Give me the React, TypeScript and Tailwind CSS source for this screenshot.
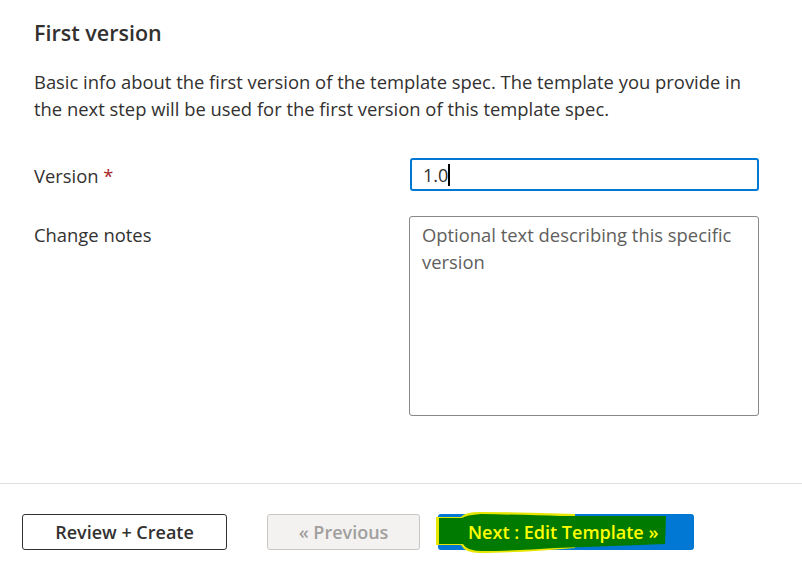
import { useState } from 'react'

const font = "font-['Open_Sans','Noto_Sans',sans-serif]"

export default function App() {
  const [version, setVersion] = useState('1.0')

  return (
    <main className={`h-[565px] w-[802px] overflow-hidden bg-white text-[#323130] ${font}`}>
      <section className="px-[34px] pt-[18px]">
        <h2 className="text-[21.5px] font-semibold leading-[30px]">First version</h2>
        <p className="mt-[21px] text-[18.4px] leading-[26.5px] text-[#323130]">
          Basic info about the first version of the template spec. The template you provide in
          the next step will be used for the first version of this template spec.
        </p>

        <div className="mt-[36px] grid grid-cols-[376px_349px] items-start gap-y-[25px]">
          <label htmlFor="version" className="pt-[4px] text-[18.4px] leading-[27px]">
            Version <span className="text-[#a4262c]">*</span>
          </label>
          <div className="relative">
            <input
              id="version"
              value={version}
              onChange={(e) => setVersion(e.target.value)}
              className="h-[33px] w-[349px] rounded-[3px] border-2 border-[#0078d4] px-[11px] text-[18px] text-[#323130] outline-none"
            />
            <span className="absolute left-[38px] top-[6px] h-[22px] w-[2px] bg-black" />
          </div>

          <label htmlFor="notes" className="pt-[5px] text-[18.4px] leading-[27px]">
            Change notes
          </label>
          <textarea
            id="notes"
            placeholder="Optional text describing this specific version"
            className="h-[200px] w-[350px] -translate-x-px resize-none rounded-[3px] border border-[#8a8886] px-[12px] py-[4px] text-[18.4px] leading-[27px] outline-none placeholder:text-[#605e5c]"
          />
        </div>
      </section>

      <div className="mt-[67px] border-t border-[#e1dfdd]" />

      <footer className="flex items-center px-[22px] pt-[30px]">
        <button className="h-[36px] w-[205px] rounded-[3px] border border-[#323130] bg-white text-[18px] font-semibold text-[#323130]">
          Review + Create
        </button>
        <button
          disabled
          className="ml-[40px] h-[36px] w-[153px] rounded-[3px] border border-[#c8c6c4] bg-[#f3f2f1] text-[18px] font-semibold text-[#a19f9d]"
        >
          « Previous
        </button>
        <button className="relative ml-[18px] h-[36px] w-[256px] rounded-[3px] bg-[#0078d4] text-left">
          {/* highlighter marks over the button */}
          <svg className="absolute left-[-3px] top-[-2px]" width="240" height="42" viewBox="0 0 240 42">
            <path d="M1 5 L26 5 Q30 0 45 0 Q90 0 140 2 L140 36 Q80 41 45 41 Q30 41 26 33 L1 33 Z" fill="#e6e600" />
            <path d="M4 6 L27 6 Q31 3 46 2 Q95 3 125 4 Q175 4 231 4 L230 32 Q180 34 120 36 Q80 39 46 39 Q32 39 28 32 L4 32 Z" fill="#007a00" />
          </svg>
          <span className="relative ml-[30px] text-[18px] font-semibold text-[#ffff00]">
            Next : Edit Template »
          </span>
        </button>
      </footer>
    </main>
  )
}
